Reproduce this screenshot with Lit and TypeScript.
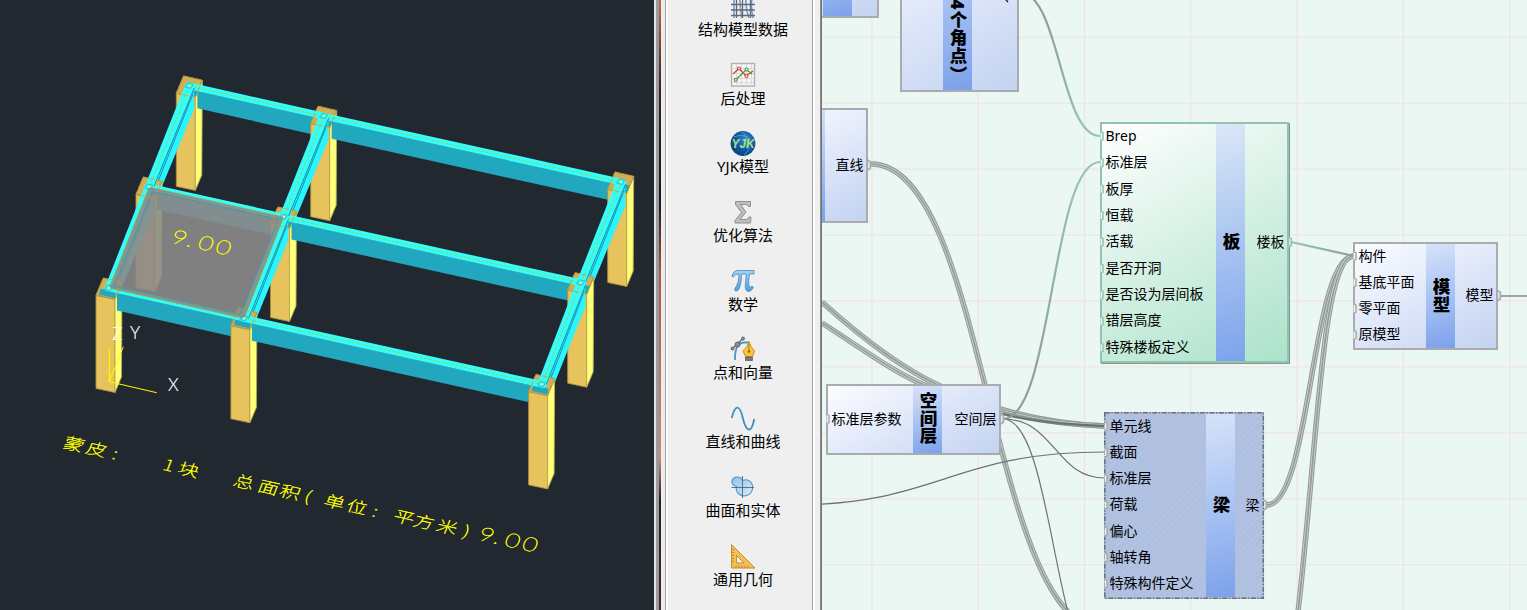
import { LitElement, html, svg, css } from "lit";
import { customElement, property } from "lit/decorators.js";
import { styleMap } from "lit/directives/style-map.js";

type Pt = [number, number];
const pts = (list: Pt[]) => list.map((p) => p.join(",")).join(" ");

/* ---------- 3D structure view ---------- */

// front-top-left corner of every column, row by row
const ROWS: Pt[][] = [
  [[176.3, 93.2], [310.7, 123.5], [607.7, 189.3]],
  [[136, 194.3], [270.5, 224.3], [567.7, 290]],
  [[96, 295.3], [230.9, 325.6], [528.6, 391.7]],
];
const H = 93.2;
const DEPTH = 17.6;
const centre = ([x, y]: Pt): Pt => [x + 13.2, y - 7.2];
const shift = ([x, y]: Pt, dx: number, dy: number): Pt => [x + dx, y + dy];

const column = ([x, y]: Pt) => {
  const a: Pt = [x, y], b: Pt = [x + 19, y + 4], c: Pt = [x + 26, y - 13], d: Pt = [x + 7.3, y - 17.3];
  return svg`
    <polygon class="col-front" points=${pts([a, b, shift(b, 0, H), shift(a, 0, H)])}></polygon>
    <polygon class="col-side" points=${pts([b, c, shift(c, -0.5, H + 1.6), shift(b, 0, H)])}></polygon>
    <polygon class="col-top" points=${pts([a, b, c, d])}></polygon>`;
};

const capOutline = ([x, y]: Pt) => svg`
  <polygon class="cap-line" points=${pts([[x, y], [x + 19, y + 4], [x + 26, y - 13], [x + 7.3, y - 17.3]])}></polygon>
  <polygon class="cap-mark" points=${pts([[x + 9, y - 6], [x + 14.5, y - 4.8], [x + 17, y - 9], [x + 11.4, y - 10.4]])}></polygon>
  <circle class="joint" cx=${x + 13.2} cy=${y - 7.4} r="0.9"></circle>`;

const xSide = (from: Pt, to: Pt) => {
  const k = (to[1] - from[1]) / (to[0] - from[0]);
  const c = centre(from);
  const x1 = from[0] + 21, x2 = to[0] + 6;
  const y = (x: number) => c[1] + k * (x - c[0]) + 3;
  return svg`<polygon class="beam-dark" points=${pts([[x1, y(x1)], [x2, y(x2)], [x2, y(x2) + DEPTH], [x1, y(x1) + DEPTH]])}></polygon>`;
};

const ySide = (from: Pt, to: Pt) => {
  const a = shift(centre(from), 4.4, 2), b = shift(centre(to), 4.4, 2);
  const s = (b[0] - a[0]) / (b[1] - a[1]);
  const e: Pt = [a[0] - 1, a[1] + 4];
  return svg`
    <polygon class="beam-mid" points=${pts([a, shift(e, 1, 0), shift(e, 1, DEPTH), shift(b, 0, DEPTH), b])}></polygon>
    <line class="beam-seam" x1=${a[0] + 1.4 + s * 6} y1=${a[1] + 6} x2=${b[0] + 1.4} y2=${b[1]}></line>`;
};

const xTop = (from: Pt, to: Pt) => {
  const a = shift(centre(from), -3, -0.6), b = shift(centre(to), 3, 0.6);
  return svg`<polygon class="beam-top" points=${pts([shift(a, 1, -3.3), shift(b, 1, -3.3), shift(b, -1, 3.1), shift(a, -1, 3.1)])}></polygon>`;
};

const yTop = (from: Pt, to: Pt) => {
  const a = centre(from), b = centre(to);
  return svg`
    <polygon class="beam-top" points=${pts([shift(a, -3.6, -3), shift(a, 5.6, -1), shift(b, 4.2, 3), shift(b, -5, 1)])}></polygon>
    <line class="beam-seam" x1=${a[0] + 4.8} y1=${a[1] + 2} x2=${b[0] + 4.4} y2=${b[1]}></line>`;
};

const axis = (from: Pt, to: Pt) => {
  const a = centre(from), b = centre(to);
  return svg`<line class="axis" x1=${a[0]} y1=${a[1]} x2=${b[0]} y2=${b[1]}></line>`;
};

const frontEnd = ([x, y]: Pt) => svg`
  <polygon class="beam-dark" points=${pts([[x + 4.5, y - 6.5], [x + 20, y - 3], [x + 19, y + 3], [x + 3, y - 0.6]])}></polygon>`;

const cornerEnd = ([x, y]: Pt) => svg`
  <polygon class="beam-dark" points=${pts([[x + 12, y - 5], [x + 22, y - 4], [x + 19.5, y + 3.5], [x + 12, y + 1.5]])}></polygon>`;

@customElement("model-view")
export class ModelView extends LitElement {
  static styles = css`
    :host { display: block; background: #212830; overflow: hidden; }
    svg { display: block; }
    .col-front { fill: #e6c35c; stroke: #a88d3e; stroke-width: 0.9; }
    .col-side { fill: #ffff7a; stroke: #b5a84e; stroke-width: 0.9; }
    .col-top { fill: #cfaf51; stroke: #b29543; stroke-width: 0.8; }
    .cap-line { fill: none; stroke: #b79a45; stroke-width: 0.8; stroke-dasharray: 5 1.5; }
    .cap-mark { fill: none; stroke: #2ba9bd; stroke-width: 0.7; }
    .joint { fill: #d8fff6; }
    .beam-dark { fill: #21a8bf; }
    .beam-mid { fill: #2cf4ff; }
    .beam-top { fill: #35fdff; }
    .beam-seam { stroke: #1593a8; stroke-width: 1; }
    .axis { stroke: #9cd62c; stroke-width: 1; stroke-dasharray: 3 1.6; }
    .slab { fill: #8c8989; fill-opacity: 0.9; stroke: #8fae4a; stroke-width: 0.8; stroke-dasharray: 3 1; }
    .slab-inner { fill: none; stroke: #3f9aa8; stroke-width: 0.9; }
    .ucs { fill: none; stroke: #ffff00; stroke-width: 1; }
    .ucs-text { fill: #fff; stroke: #fff; stroke-width: 0.2; font: 300 17px Lato, "Open Sans", sans-serif; }
    .note { fill: #ffff00; stroke: #ffff00; stroke-width: 0.5; }
    .han { font: 100 20px "Noto Sans CJK SC", sans-serif; }
    .num { font: 200 25px Lato, sans-serif; stroke-width: 0.75; }
  `;

  render() {
    const [r1, r2, r3] = ROWS;
    const row = (r: Pt[]) => svg`
      ${column(r[0])}${xSide(r[0], r[1])}${column(r[1])}${xSide(r[1], r[2])}${column(r[2])}`;
    const [D, E, Hh, G] = [centre(r2[0]), centre(r2[1]), centre(r3[1]), centre(r3[0])];
    return html`
      <svg width="654" height="610" viewBox="0 0 654 610">
        ${row(r1)}
        ${r1.map(cornerEnd)}
        ${r1.map((c, i) => ySide(c, r2[i]))}
        ${row(r2)}
        ${r2.map(cornerEnd)}
        ${r2.map((c, i) => ySide(c, r3[i]))}
        ${row(r3)}
        ${r3.map(frontEnd)}
        ${ROWS.map((r) => [xTop(r[0], r[1]), xTop(r[1], r[2])])}
        ${r1.map((c, i) => yTop(c, r2[i]))}
        ${r2.map((c, i) => yTop(c, r3[i]))}
        ${ROWS.map((r) => [axis(r[0], r[1]), axis(r[1], r[2])])}
        ${r1.map((c, i) => [axis(c, r2[i]), axis(r2[i], r3[i])])}
        <polygon class="slab" points=${pts([D, E, Hh, G])}></polygon>
        <polygon class="slab-inner" points=${pts([shift(D, 3, 4.5), shift(E, -5, 2.4), shift(Hh, -4, -4), shift(G, 5, -2)])}></polygon>
        ${ROWS.flat().map(capOutline)}
        <path class="ucs" d="M109.3 349V381.7L123.3 346.7M109.3 381.7L156.7 392.7"></path>
        <text class="ucs-text" x="112.3" y="340">Z</text>
        <text class="ucs-text" x="130" y="339.4">Y</text>
        <text class="ucs-text" x="168" y="391">X</text>
        <text class="note num" transform="matrix(1 .222 -.27 .74 168 242)" x="2 17 28.500 46">9.00</text>
        <g class="note" transform="matrix(1 .222 -.29 .74 62 447.5)">
          <text class="han" x="0 22.500 49">蒙皮:</text>
          <text class="han" x="99.500 114.500">1块</text>
          <text class="han" x="170 194.500 216 241">总面积(</text>
          <text class="han" x="260.500 283 309">单位:</text>
          <text class="han" x="330 350 373 399.500">平方米)</text>
          <text class="num" x="415 430 441 458.500">9.00</text>
        </g>
      </svg>`;
  }
}

/* ---------- category list ---------- */

const ICONS: Record<string, unknown> = {
  grid: svg`
    <path d="M4 0V25M10.500 0Q9 12 12 25M17 0Q14 12 19 25M23 0Q20 12 23 25" fill="none" stroke="#6d9fd6" stroke-width="1.6"></path>
    <path d="M1 11.500H25M1 17H25M1 22.500H25M6.500 0V25M12.500 0V25M20.500 0V25" fill="none" stroke="#66696f" stroke-width="1.300"></path>`,
  chart: svg`
    <rect x="1.500" y="1.500" width="23" height="22.500" fill="#f6f6f6" stroke="#b0b0b0" stroke-width="1.400"></rect>
    <path d="M6.500 2V24M11.500 2V24M16.500 2V24M21.500 2V24M2 6.500H24M2 11.500H24M2 16.500H24M2 20.500H24" stroke="#d9d9d9"></path>
    <path d="M3 12L9 6.500L16 14L23 9" fill="none" stroke="#d0453f" stroke-width="1.300"></path>
    <path d="M5.500 18L16.500 7.500L22 12" fill="none" stroke="#4d9c2e" stroke-width="1.300"></path>
    <g fill="#fff" stroke-width="1.200"><circle cx="9" cy="6.500" r="1.500" stroke="#d0453f"></circle><circle cx="16.500" cy="14" r="1.500" stroke="#d0453f"></circle><circle cx="5.800" cy="17.800" r="1.500" stroke="#4d9c2e"></circle><circle cx="16.500" cy="7.500" r="1.500" stroke="#4d9c2e"></circle></g>`,
  yjk: svg`
    <defs><radialGradient id="globe" cx=".6" cy=".35" r=".7"><stop offset="0" stop-color="#2f8fd0"></stop><stop offset=".6" stop-color="#11559f"></stop><stop offset="1" stop-color="#0a3f7c"></stop></radialGradient></defs>
    <circle cx="13" cy="13.500" r="12.400" fill="url(#globe)"></circle>
    <path d="M4 7Q13 3 20 9M12 2Q18 5 19 19Q17 23 14 25" fill="none" stroke="#6fb6dd" stroke-width=".8" opacity=".8"></path>
    <text x="13" y="18.300" text-anchor="middle" textLength="23" lengthAdjust="spacingAndGlyphs" fill="#a4e27c" font-family="Liberation Sans, sans-serif" font-size="13" font-weight="700" font-style="italic">YJK</text>`,
  sigma: svg`<path d="M5.500 2.500H20.500V7.500H18.500Q18 5.500 15.500 5.500H10.500L16 13L10 20.500H16Q18.500 20.500 19 18H21L20.500 24H5V21.500L11.500 13.500L5.500 5.500Z" fill="#bcbec0" stroke="#8e9092" stroke-width="1"></path>`,
  pi: svg`
    <defs><linearGradient id="pi-fill" x2="0" y2="1"><stop offset="0" stop-color="#a5d3f2"></stop><stop offset="1" stop-color="#4ba0dc"></stop></linearGradient></defs>
    <path d="M2 8.500Q3 2.500 8 2.500H24V6H19.500Q18 14 19 18Q20 20.500 22 18L23.500 19.500Q21 23.800 18 23.500Q15 22.500 15.300 17L16.300 6H11.500Q11.500 15 9.500 20Q8 23.800 5.500 23Q3.500 21 6.500 18Q9 14 9 6Q5 5.500 3.500 9Z" fill="url(#pi-fill)" stroke="#4289bd" stroke-width=".8"></path>`,
  pen: svg`
    <path d="M5 24Q4.500 7 14 6.500H19" fill="none" stroke="#4598cf" stroke-width="1.800"></path>
    <path d="M2 13L13.500 2" stroke="#686868" stroke-width="1.400"></path>
    <g fill="#8b8b8b" stroke="#555" stroke-width=".8"><circle cx="2.500" cy="12.500" r="1.500"></circle><circle cx="7.500" cy="8.500" r="2.500"></circle><circle cx="13" cy="2.500" r="1.500"></circle></g>
    <path d="M19 5.500Q20.500 11 24.500 15L22.500 20.500H15.500L13 15Q17.500 11 19 5.500Z" fill="#fac638" stroke="#c5861c" stroke-width=".9"></path>
    <path d="M19 8V15" stroke="#9a6a12" stroke-width=".8"></path><circle cx="19" cy="15.500" r="1.200" fill="#8b6117"></circle>
    <path d="M15.500 21H22.500V24.500H15.500Z" fill="#77797c" stroke="#55575a" stroke-width=".7"></path>`,
  sine: svg`<path d="M1.800 13C5 -.5 9.500 -1 12.700 12.500C16 27 21.500 29.500 24.200 14" fill="none" stroke="#3b8fc4" stroke-width="1.800"></path>`,
  surface: svg`
    <defs><linearGradient id="blob" x2="1" y2="1"><stop offset="0" stop-color="#8ec0e8"></stop><stop offset="1" stop-color="#d9edfb"></stop></linearGradient></defs>
    <path d="M7.500 3C11 3 12 5 12.500 6.500C19 4 23.500 9 22.500 15C21 22 13 24 8.500 19.500C6 17 6 14 6.500 12.500C-.5 11 1 3 7.500 3Z" fill="url(#blob)" stroke="#5492c4" stroke-width="1.100"></path>
    <path d="M12.500 2V24M1.500 13.500H24" stroke="#53646f" stroke-width=".9"></path>`,
  triangle: svg`
    <path fill-rule="evenodd" d="M1.500 1.500L25 25H1.500ZM6.500 12.500V20H14Z" fill="#f2bf57" stroke="#c68f2b" stroke-width="1"></path>
    <path d="M2 6.500H4M2 9.500H4M2 12.500H4M2 15.500H4M2 18.500H4M6 24.500V22.500M9 24.500V22.500M12 24.500V22.500M15 24.500V22.500M18 24.500V22.500" stroke="#a87519" stroke-width=".7"></path>`,
};

const CATEGORIES = [
  { icon: "grid", label: "结构模型数据" },
  { icon: "chart", label: "后处理" },
  { icon: "yjk", label: "YJK模型" },
  { icon: "sigma", label: "优化算法" },
  { icon: "pi", label: "数学" },
  { icon: "pen", label: "点和向量" },
  { icon: "sine", label: "直线和曲线" },
  { icon: "surface", label: "曲面和实体" },
  { icon: "triangle", label: "通用几何" },
];

@customElement("category-list")
export class CategoryList extends LitElement {
  static styles = css`
    :host { display: flex; overflow: hidden; background: #efefef; }
    .edge { width: 2px; background: #e2e4e6; }
    .bar { width: 3px; background: #989ca6; }
    .seam { width: 2px; background: linear-gradient(#c46a3a, #3a2018 15%, #1e1412 33%, #b05a38 45%, #d08a70 75%, #2c1c18 82%, #4a2a1c); }
    .pad { width: 4px; background: #ececec; }
    .list {
      flex: 1; display: flex; flex-direction: column; margin-right: 7px;
      border-left: 1px solid #a0a0a0; border-right: 1px solid #a0a0a0;
      box-shadow: inset 2px 0 #fff, 2px 0 #fff;
    }
    .rail { width: 2px; background: linear-gradient(90deg, #9a9a9a, #666); }
    .items { display: flex; flex-direction: column; margin-top: -7px; }
    .item { height: 68.7px; flex: none; display: flex; flex-direction: column; align-items: center; padding-left: 8px; }
    .item svg { display: block; flex: none; }
    .label { font: 15px/20px "Noto Sans", "Noto Sans CJK SC", sans-serif; color: #000; white-space: nowrap; }
  `;

  render() {
    return html`
      <div class="edge"></div><div class="bar"></div><div class="seam"></div><div class="pad"></div>
      <div class="list">
        <div class="items">
          ${CATEGORIES.map((c) => html`
            <div class="item">
              <svg width="26" height="26" viewBox="0 0 26 26">${ICONS[c.icon]}</svg>
              <div class="label">${c.label}</div>
            </div>`)}
        </div>
      </div>
      <div class="rail"></div>`;
  }
}

/* ---------- node graph ---------- */

interface GraphNode {
  x: number; y: number; w: number; h: number;
  band: number;
  title: string;
  inputs: string[];
  outputs: string[];
  tone?: "green" | "selected";
}

// coordinates are relative to the canvas, whose left edge is 822px into the window
const NODES: GraphNode[] = [
  { x: -90, y: -80, w: 147, h: 98, band: 89, title: "", inputs: [], outputs: [] },
  { x: 78, y: -110, w: 118.5, h: 202, band: 41, title: "（4个角点）", inputs: [], outputs: [] },
  { x: -60, y: 108, w: 106, h: 115, band: 32, title: "", inputs: [], outputs: ["直线"] },
  { x: 4, y: 384, w: 175, h: 71, band: 85, title: "空间层", inputs: ["标准层参数"], outputs: ["空间层"] },
  { x: 278, y: 122, w: 189, h: 241, band: 114, title: "板", tone: "green", inputs: ["Brep", "标准层", "板厚", "恒载", "活载", "是否开洞", "是否设为层间板", "错层高度", "特殊楼板定义"], outputs: ["楼板"] },
  { x: 282, y: 412, w: 160, h: 187, band: 100, title: "梁", tone: "selected", inputs: ["单元线", "截面", "标准层", "荷载", "偏心", "轴转角", "特殊构件定义"], outputs: ["梁"] },
  { x: 531, y: 242, w: 145, h: 108, band: 71, title: "模型", inputs: ["构件", "基底平面", "零平面", "原模型"], outputs: ["模型"] },
];

@customElement("graph-node")
export class GraphNodeCard extends LitElement {
  @property({ attribute: false }) node!: GraphNode;

  static styles = css`
    :host { display: block; }
    .card {
      box-sizing: border-box; width: 100%; height: 100%; display: flex;
      border: 2px solid #a9abae; color: #000;
      background: linear-gradient(150deg, #fcfdff, #dfe7f9 50%, #c3d3f2);
      font: 14px/20px "Noto Sans", "Noto Sans CJK SC", sans-serif;
    }
    .green { border-color: #93c3b0; background: linear-gradient(150deg, #fff, #d5f0e4 50%, #abe2ca); box-shadow: 1px 1px #7b9b98; }
    .selected { border-color: transparent; background: repeating-linear-gradient(135deg, #aebfe0 0 3px, #b4c4e2 3px 4px) border-box; }
    .inputs, .outputs { display: flex; flex-direction: column; white-space: nowrap; padding-bottom: 2px; }
    .inputs { padding-left: 3.5px; box-sizing: border-box; flex: none; }
    .outputs { flex: 1; padding-right: 2.5px; align-items: flex-end; }
    .row { flex: 1; display: flex; align-items: center; }
    .inputs { margin-top: -1px; padding-bottom: 1px; }
    .band {
      width: 29px; flex: none; display: flex; align-items: center; justify-content: center;
      background: linear-gradient(165deg, #d6e2f9, #a9c3f3 50%, #7ca1ea);
    }
    .green .band { background: linear-gradient(165deg, #dbe7f7, #a9c5f0 50%, #7ca3ec); }
    .title { writing-mode: vertical-rl; text-orientation: mixed; font-weight: 900; font-size: 17.500px; line-height: 29px; white-space: nowrap; margin-bottom: 2px; }
    .tall .band { align-items: flex-end; }
    .tall .title { margin-bottom: 6px; letter-spacing: 0.8px; }
  `;

  render() {
    const n = this.node;
    return html`
      <div class="card ${n.tone ?? ""} ${n.title.length > 3 ? "tall" : ""}">
        <div class="inputs" style=${styleMap({ width: `${n.band}px` })}>${n.inputs.map((t) => html`<div class="row">${t}</div>`)}</div>
        <div class="band"><div class="title">${n.title}</div></div>
        <div class="outputs">${n.outputs.map((t) => html`<div class="row">${t}</div>`)}</div>
      </div>`;
  }
}

const TRIPLE = [
  "M49 164C166 164 166 630 283 630",
  "M0 302C50 347 86 371 116 385C172 412 230 424 283 426",
  "M0 323C42 350 72 372 100 384C166 412 220 424 283 426",
  "M445 505C489 505 489 256 532 256",
  "M476 612C496 440 500 256 532 256",
];
const THIN = [
  "M-32 505C118 505 128 452 283 452",
  "M181 419C233 419 233 478 283 478",
  "M181 419C232 419 232 677 283 677",
  "M679 296H705",
];
const GREEN = [
  { d: "M197 -8C238 -8 238 136 278 136", id: "wire-a" },
  { d: "M181 419C231 419 229 162 278 162", id: "wire-b" },
  { d: "M469 242L532 256", id: "wire-c" },
];

@customElement("graph-canvas")
export class GraphCanvas extends LitElement {
  static styles = css`
    :host { display: block; position: relative; overflow: hidden; background: #eaf7f3; }
    .layer { position: absolute; inset: 0; display: block; }
    .grid { stroke: #f1e4e4; stroke-width: 1.300; }
    .outer { fill: none; stroke: #949c99; stroke-width: 5.400; }
    .gap { fill: none; stroke: #ccd6d2; stroke-width: 3.200; }
    .core { fill: none; stroke: #949c99; stroke-width: 1.700; }
    .dark { fill: none; stroke: #555d5a; stroke-width: 2.500; stroke-opacity: .7; }
    .thin { fill: none; stroke: #6b7370; stroke-width: 1.200; }
    .soft { fill: none; stroke-width: 2.200; }
    .slot { position: absolute; }
    .port { stroke-width: 1.500; }
    .dash { fill: none; stroke: #6a6f76; stroke-width: 1.500; stroke-dasharray: 5 1.500 1.500 1.500; }
  `;

  private ports(n: GraphNode) {
    const stroke = n.tone === "green" ? "#93c3b0" : "#a7a9ad";
    const mark = (x: number, i: number, count: number, fill: string) => {
      const y = n.y + 1 + ((n.h - 3) * (i + 0.5)) / count;
      return svg`<path class="port" fill=${fill} stroke=${stroke} d="M${x} ${y - 5.5}Q${x} ${y - 4} ${x + 2.4} ${y - 3.5}V${y + 3.5}Q${x} ${y + 4} ${x} ${y + 5.5}"></path>`;
    };
    return [
      n.inputs.map((_, i) => mark(n.x + 0.6, i, n.inputs.length, "#eaf7f3")),
      n.outputs.map((_, i) => mark(n.x + n.w, i, n.outputs.length, n.tone === "green" ? "#cdebdd" : "#dfe6f5")),
    ];
  }

  render() {
    const v = Array.from({ length: 7 }, (_, i) => 49.9 + i * 106.3);
    const h = Array.from({ length: 9 }, (_, i) => 37.4 + i * 65.9);
    return html`
      <svg class="layer" width="705" height="610" viewBox="0 0 705 610">
        <defs>
          <linearGradient id="wire-a" gradientUnits="userSpaceOnUse" x1="215" y1="0" x2="278" y2="136"><stop offset="0" stop-color="#8b9b96"></stop><stop offset="1" stop-color="#97c6b3"></stop></linearGradient>
          <linearGradient id="wire-b" gradientUnits="userSpaceOnUse" x1="181" y1="419" x2="278" y2="162"><stop offset="0" stop-color="#8b9b96"></stop><stop offset="1" stop-color="#97c6b3"></stop></linearGradient>
          <linearGradient id="wire-c" gradientUnits="userSpaceOnUse" x1="469" y1="242" x2="532" y2="256"><stop offset="0" stop-color="#97c6b3"></stop><stop offset="1" stop-color="#8b9b96"></stop></linearGradient>
        </defs>
        ${v.map((x) => svg`<line class="grid" x1=${x} x2=${x} y1="0" y2="610"></line>`)}
        ${h.map((y) => svg`<line class="grid" x1="0" x2="705" y1=${y} y2=${y}></line>`)}
        ${TRIPLE.map((d) => svg`<path class="outer" d=${d}></path><path class="gap" d=${d}></path><path class="core" d=${d}></path>`)}
        <path class="dark" d="M181 414C215 423 250 425 283 426"></path>
        ${THIN.map((d) => svg`<path class="thin" d=${d}></path>`)}
        ${GREEN.map((g) => svg`<path class="soft" d=${g.d} stroke="url(#${g.id})"></path>`)}
      </svg>
      ${NODES.map((n) => html`
        <graph-node class="slot" .node=${n}
          style=${styleMap({ left: `${n.x}px`, top: `${n.y}px`, width: `${n.w}px`, height: `${n.h}px` })}></graph-node>`)}
      <svg class="layer" width="705" height="610" viewBox="0 0 705 610">
        <rect class="dash" x="282.800" y="412.800" width="158.500" height="185.500"></rect>
        ${NODES.map((n) => this.ports(n))}
        <path d="M184 0L186 2" stroke="#222" stroke-width="1.500"></path>
      </svg>`;
  }
}

@customElement("app-root")
export class AppRoot extends LitElement {
  static styles = css`
    :host { display: grid; grid-template-columns: 654px 168px 1fr; height: 610px; overflow: hidden; }
  `;
  render() {
    return html`<model-view></model-view><category-list></category-list><graph-canvas></graph-canvas>`;
  }
}
